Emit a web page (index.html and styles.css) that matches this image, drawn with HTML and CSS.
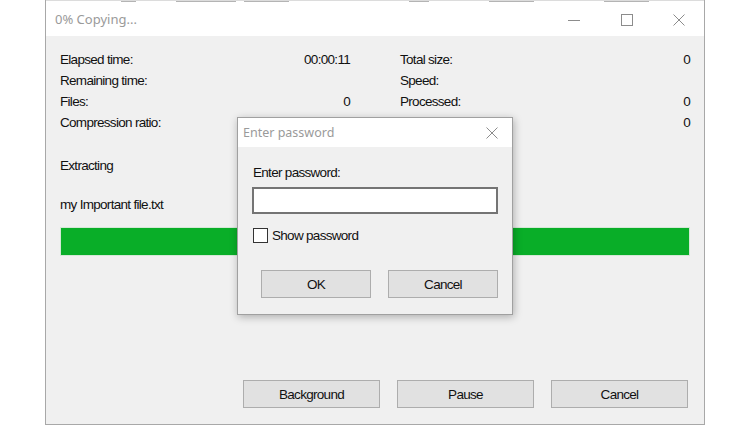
FILE: index.html
```html
<!DOCTYPE html>
<html>
<head>
<meta charset="utf-8">
<link rel="stylesheet" href="styles.css">
</head>
<body>
<div class="window">
  <div class="topstrip">
    <span class="frag f1"></span><span class="frag f2"></span><span class="frag f3"></span><span class="frag f4"></span><span class="frag f5"></span><span class="frag f6"></span>
  </div>
  <div class="titlebar">
    <div class="title">0% Copying...</div>
    <div class="controls">
      <div class="ctl"><svg width="12" height="12" viewBox="0 0 12 12"><line x1="0" y1="6.5" x2="12" y2="6.5" stroke="#8c8c8c" stroke-width="1"/></svg></div>
      <div class="ctl"><svg width="12" height="12" viewBox="0 0 12 12"><rect x="0.5" y="0.5" width="11" height="11" fill="none" stroke="#8c8c8c" stroke-width="1"/></svg></div>
      <div class="ctl"><svg width="12" height="12" viewBox="0 0 12 12"><path d="M0.5 0.5 L11.5 11.5 M11.5 0.5 L0.5 11.5" stroke="#8c8c8c" stroke-width="1" fill="none"/></svg></div>
    </div>
  </div>
  <div class="content">
    <div class="stats">
      <div class="row"><span>Elapsed time:</span><span>00:00:11</span></div>
      <div class="row"><span>Total size:</span><span>0</span></div>
      <div class="row"><span>Remaining time:</span><span></span></div>
      <div class="row"><span>Speed:</span><span></span></div>
      <div class="row"><span>Files:</span><span>0</span></div>
      <div class="row"><span>Processed:</span><span>0</span></div>
      <div class="row"><span>Compression ratio:</span><span></span></div>
      <div class="row"><span>Compressed size:</span><span>0</span></div>
    </div>
    <div class="status">Extracting</div>
    <div class="file">my Important file.txt</div>
    <div class="progress"><div class="bar" style="width: 100%"></div></div>
    <div class="buttons">
      <button class="btn wide">Background</button>
      <button class="btn wide">Pause</button>
      <button class="btn wide">Cancel</button>
    </div>
  </div>
</div>

<div class="dialog">
  <div class="dtitlebar">
    <div class="dtitle">Enter password</div>
    <div class="dclose"><svg width="12" height="12" viewBox="0 0 12 12"><path d="M0.5 0.5 L11.5 11.5 M11.5 0.5 L0.5 11.5" stroke="#8c8c8c" stroke-width="1" fill="none"/></svg></div>
  </div>
  <div class="dbody">
    <div class="dlabel">Enter password:</div>
    <div class="input"></div>
    <div class="check"><span class="box"></span><span>Show password</span></div>
    <div class="dbuttons">
      <button class="btn dbtn">OK</button>
      <button class="btn dbtn">Cancel</button>
    </div>
  </div>
</div>
</body>
</html>
```

FILE: styles.css
```css
* { box-sizing: border-box; }
html, body {
  margin: 0;
  padding: 0;
  background: #ffffff;
  width: 750px;
  height: 425px;
  overflow: hidden;
  font-family: "Liberation Sans", Arial, sans-serif;
  font-size: 13.5px;
  letter-spacing: -0.7px;
  color: #111;
}
.window {
  margin-left: 45px;
  width: 660px;
  height: 425px;
  border: 1px solid #a8a8a8;
  border-top: none;
  display: flex;
  flex-direction: column;
  background: #fff;
}
.topstrip {
  height: 3px;
  border-top: 1px solid #dcdcdc;
  display: flex;
  align-items: flex-start;
}
.frag {
  height: 1px;
  background: #b4b4b4;
  display: block;
}
.f1 { margin-left: 75px; width: 15px; }
.f2 { margin-left: 40px; width: 60px; }
.f3 { margin-left: 8px; width: 45px; }
.f4 { margin-left: 120px; width: 20px; }
.f5 { margin-left: 60px; width: 45px; }
.f6 { margin-left: 70px; width: 45px; }
.titlebar {
  height: 33px;
  display: flex;
  align-items: center;
  background: #fff;
}
.title {
  padding-left: 9px;
  font-family: "Noto Sans", "Open Sans", sans-serif;
  font-size: 13px;
  letter-spacing: 0;
  color: #9a9a9a;
  margin-top: -1px;
}
.controls {
  margin-left: auto;
  display: flex;
  height: 100%;
}
.ctl {
  width: 53px;
  display: flex;
  align-items: center;
  justify-content: center;
}
.ctl:last-child { width: 51px; }
.content {
  flex: 1;
  background: #f0f0f0;
  padding: 13px 14px 16px 14px;
  display: flex;
  flex-direction: column;
}
.stats {
  display: grid;
  grid-template-columns: 290px 290px;
  column-gap: 50px;
}
.row {
  height: 21px;
  line-height: 21px;
  display: flex;
  justify-content: space-between;
}
.status {
  margin-top: 23px;
  line-height: 20px;
}
.file {
  margin-top: 19px;
  line-height: 20px;
}
.progress {
  margin-top: 12px;
  height: 29px;
  width: 630px;
  background: #e6e6e6;
  border: 1px solid #d4e8d6;
}
.bar {
  height: 100%;
  background: #09ae28;
}
.buttons {
  margin-top: auto;
  display: flex;
  justify-content: flex-end;
  gap: 17px;
  padding-right: 2px;
}
.btn {
  font-family: "Liberation Sans", Arial, sans-serif;
  font-size: 13.5px;
  letter-spacing: -0.7px;
  color: #111;
  background: #e1e1e1;
  border: 1px solid #adadad;
  padding: 0;
  margin: 0;
}
.wide {
  width: 137px;
  height: 28px;
}
.dialog {
  position: absolute;
  left: 237px;
  top: 117px;
  width: 276px;
  height: 198px;
  border: 1px solid #a0a0a0;
  box-shadow: 1px 2px 8px rgba(0, 0, 0, 0.28);
  display: flex;
  flex-direction: column;
  background: #f0f0f0;
}
.dtitlebar {
  height: 29px;
  background: #fff;
  display: flex;
  align-items: center;
}
.dtitle {
  padding-left: 5px;
  font-family: "Noto Sans", "Open Sans", sans-serif;
  font-size: 12.5px;
  letter-spacing: 0;
  color: #9a9a9a;
}
.dclose {
  margin-left: auto;
  width: 38px;
  display: flex;
  justify-content: center;
  padding-right: 2px;
}
.dbody {
  flex: 1;
  padding: 16px 0 0 15px;
}
.dlabel {
  line-height: 20px;
}
.input {
  margin-top: 4px;
  margin-left: -1px;
  width: 246px;
  height: 27px;
  background: #fff;
  border: 2px solid #747474;
}
.check {
  margin-top: 14px;
  display: flex;
  align-items: center;
  gap: 4px;
  height: 15px;
}
.box {
  width: 15px;
  height: 15px;
  background: #fff;
  border: 1px solid #333;
}
.dbuttons {
  margin-top: 27px;
  margin-left: 8px;
  display: flex;
  gap: 17px;
}
.dbtn {
  width: 110px;
  height: 28px;
}
```
